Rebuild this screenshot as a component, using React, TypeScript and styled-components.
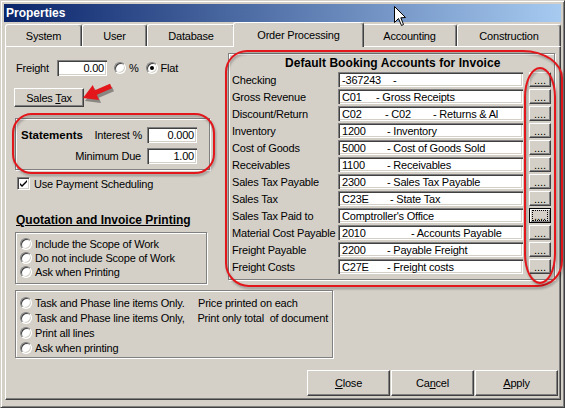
import styled, { createGlobalStyle, css } from 'styled-components';

const FACE = '#d4d0c8';
const SHADOW = '#808080';
const DARK = '#404040';
const RED = '#e3161b';

const GlobalStyle = createGlobalStyle`
  html, body {
    margin: 0;
    padding: 0;
    background: ${FACE};
  }
  body {
    font-family: "Liberation Sans", Arial, sans-serif;
    font-size: 11px;
  }
`;

type Part = [string, number?];
type Account = { label: string; parts: Part[]; focused?: boolean };

const accounts: Account[] = [
  { label: 'Checking', parts: [['-367243', 51], ['-']] },
  { label: 'Gross Revenue', parts: [['C01', 34], ['- Gross Receipts']] },
  { label: 'Discount/Return', parts: [['C02', 43], ['- C02', 48], ['- Returns & Al']] },
  { label: 'Inventory', parts: [['1200', 45], ['- Inventory']] },
  { label: 'Cost of Goods', parts: [['5000', 45], ['- Cost of Goods Sold']] },
  { label: 'Receivables', parts: [['1100', 45], ['- Receivables']] },
  { label: 'Sales Tax Payable', parts: [['2300', 45], ['- Sales Tax Payable']] },
  { label: 'Sales Tax', parts: [['C23E', 48], ['- State Tax']] },
  { label: 'Sales Tax Paid to', parts: [["Comptroller's Office"]], focused: true },
  { label: 'Material Cost Payable', parts: [['2010', 69], ['- Accounts Payable']] },
  { label: 'Freight Payable', parts: [['2200', 45], ['- Payable Freight']] },
  { label: 'Freight Costs', parts: [['C27E', 45], ['- Freight costs']] },
];

const tabs = [
  { name: 'System', w: 77 },
  { name: 'User', w: 65 },
  { name: 'Database', w: 88 },
  { name: 'Order Processing', w: 131, active: true },
  { name: 'Accounting', w: 95 },
  { name: 'Construction', w: 104 },
];

export default function App() {
  return (
    <>
      <GlobalStyle />
      <Window>
        <TitleBar>Properties</TitleBar>
        <TabStrip>
          {tabs.map(t => (
            <Tab key={t.name} $w={t.w} $active={t.active}>{t.name}</Tab>
          ))}
        </TabStrip>
        <Panel>
          <TopSection>
            <LeftCol>
              <FreightRow>
                <FreightLabel>Freight</FreightLabel>
                <TextBox $w={50}>0.00</TextBox>
                <Radio />
                <RadioText>%</RadioText>
                <Radio $on />
                <RadioText>Flat</RadioText>
              </FreightRow>
              <PushButton><span>Sales <u>T</u>ax</span></PushButton>
              <StatementsBox>
                <BoldLabel>Statements</BoldLabel>
                <RightLabel>Interest %</RightLabel>
                <TextBox $w={50}>0.000</TextBox>
                <RightLabel $span>Minimum Due</RightLabel>
                <TextBox $w={50}>1.00</TextBox>
              </StatementsBox>
              <CheckRow>
                <CheckBox>
                  <svg width="9" height="9" viewBox="0 0 9 9">
                    <path d="M1 4 L3 6 L8 1 L8 3 L3 8 L1 6 Z" fill="#000" />
                  </svg>
                </CheckBox>
                Use Payment Scheduling
              </CheckRow>
              <SectionHeading>Quotation and Invoice Printing</SectionHeading>
              <GroupBox $w={192}>
                <OptionRow $h={14}><Radio />Include the Scope of Work</OptionRow>
                <OptionRow $h={14}><Radio />Do not include Scope of Work</OptionRow>
                <OptionRow $h={14}><Radio />Ask when Printing</OptionRow>
              </GroupBox>
            </LeftCol>
            <AccountsBox>
              <AccountsTitle>Default Booking Accounts for Invoice</AccountsTitle>
              <AccountList>
                {accounts.map(a => (
                  <AccountRow key={a.label}>
                    <AccountLabel>{a.label}</AccountLabel>
                    <AccountField>
                      {a.parts.map(([text, w], i) => (
                        <Seg key={i} $w={w}>{text}</Seg>
                      ))}
                    </AccountField>
                    <BrowseButton $focused={a.focused}>
                      <BrowseDots $focused={a.focused}>....</BrowseDots>
                    </BrowseButton>
                  </AccountRow>
                ))}
              </AccountList>
            </AccountsBox>
          </TopSection>
          <GroupBox $w={318} $wide>
            <OptionRow $h={15}><Radio /><FirstCol>Task and Phase line items Only.</FirstCol>Price printed on each</OptionRow>
            <OptionRow $h={15}><Radio /><FirstCol>Task and Phase line items Only,</FirstCol>Print only total&nbsp; of document</OptionRow>
            <OptionRow $h={15}><Radio />Print all lines</OptionRow>
            <OptionRow $h={15}><Radio />Ask when printing</OptionRow>
          </GroupBox>
          <ButtonRow>
            <DialogButton><span><u>C</u>lose</span></DialogButton>
            <DialogButton><span>Ca<u>n</u>cel</span></DialogButton>
            <DialogButton><span><u>A</u>pply</span></DialogButton>
          </ButtonRow>
        </Panel>

        <Annotation $x={11} $y={112} $w={203} $h={61} $r="20px" />
        <Annotation $x={224} $y={49} $w={338} $h={237} $r="22px 40px 26px 24px / 22px 28px 26px 24px" />
        <Annotation $x={523} $y={66} $w={32} $h={217} $r="16px / 30px" />

        <Marker width="40" height="36" viewBox="0 0 40 36">
          <polygon
            points="6,21 15.8,8.1 17.9,13.2 33,6.7 35,11.3 19.9,17.8 22,23"
            fill="rgba(0,0,0,0.35)"
            transform="translate(2 3)"
          />
          <polygon points="6,21 15.8,8.1 17.9,13.2 33,6.7 35,11.3 19.9,17.8 22,23" fill={RED} />
        </Marker>

        <Cursor width="13" height="21" viewBox="0 0 13 21">
          <path d="M0.5 0.5 L0.5 16.5 L4.5 12.5 L7.5 19.5 L9.5 18.5 L6.8 11.8 L11.5 11.5 Z" fill="#fff" stroke="#000" strokeWidth="1" />
        </Cursor>
      </Window>
    </>
  );
}

const Window = styled.div`
  position: relative;
  box-sizing: border-box;
  width: 565px;
  height: 408px;
  padding: 3px;
  background: ${FACE};
  border: 1px solid;
  border-color: ${FACE} ${DARK} ${DARK} ${FACE};
  box-shadow: inset 1px 1px #fff, inset -1px -1px ${SHADOW};
  display: flex;
  flex-direction: column;
  overflow: hidden;
  color: #000;
  font-family: "Liberation Sans", Arial, sans-serif;
  font-size: 11px;
  letter-spacing: -0.2px;
`;

const TitleBar = styled.div`
  height: 18px;
  padding-left: 2px;
  background: linear-gradient(to right, #0a246a, #a6caf0);
  color: #fff;
  font-weight: bold;
  font-size: 12px;
  letter-spacing: 0;
  line-height: 18px;
`;

const TabStrip = styled.div`
  height: 24px;
  padding-left: 1px;
  display: flex;
  align-items: flex-end;
`;

const Tab = styled.div<{ $w: number; $active?: boolean }>`
  box-sizing: border-box;
  width: ${p => p.$w}px;
  height: ${p => (p.$active ? 25 : 22)}px;
  margin: 0 ${p => (p.$active ? -2 : 0)}px ${p => (p.$active ? -1 : 0)}px;
  position: relative;
  z-index: ${p => (p.$active ? 2 : 0)};
  background: ${FACE};
  border-top: 1px solid #fff;
  border-left: 1px solid #fff;
  border-right: 1px solid ${DARK};
  box-shadow: inset -1px 0 ${SHADOW};
  border-radius: 3px 3px 0 0;
  display: flex;
  align-items: center;
  justify-content: center;
  padding-top: ${p => (p.$active ? 0 : 1)}px;
  white-space: nowrap;
`;

const Panel = styled.div`
  box-sizing: border-box;
  width: 556px;
  height: 354px;
  margin-left: 1px;
  padding: 0 2px 3px 8px;
  border-top: 1px solid #fff;
  border-left: 1px solid #fff;
  border-right: 1px solid ${DARK};
  border-bottom: 1px solid ${DARK};
  box-shadow: inset -1px -1px ${SHADOW};
  display: flex;
  flex-direction: column;
`;

const TopSection = styled.div`
  display: flex;
  align-items: flex-start;
`;

const LeftCol = styled.div`
  width: 197px;
  margin-right: 17px;
  padding-top: 13px;
  display: flex;
  flex-direction: column;
  align-items: flex-start;
`;

const FreightRow = styled.div`
  height: 16px;
  padding-left: 2px;
  display: flex;
  align-items: center;
`;

const FreightLabel = styled.span`
  width: 41px;
`;

const TextBox = styled.div<{ $w: number }>`
  box-sizing: border-box;
  width: ${p => p.$w}px;
  height: 16px;
  padding: 0 3px;
  background: #fff;
  box-shadow: inset 1px 1px ${SHADOW}, inset 2px 2px ${DARK}, inset -1px -1px #fff, inset -2px -2px ${FACE};
  text-align: right;
  line-height: 16px;
  margin-right: 7px;
`;

const Radio = styled.span<{ $on?: boolean }>`
  box-sizing: border-box;
  flex-shrink: 0;
  position: relative;
  width: 12px;
  height: 12px;
  border-radius: 50%;
  background: #fff;
  border: 1px solid;
  border-color: ${SHADOW} #fff #fff ${SHADOW};
  box-shadow: inset 1px 1px ${DARK}, inset -1px -1px ${FACE};
  ${p =>
    p.$on &&
    css`
      &::after {
        content: '';
        position: absolute;
        left: 3px;
        top: 3px;
        width: 4px;
        height: 4px;
        border-radius: 50%;
        background: #000;
      }
    `}
`;

const RadioText = styled.span`
  margin: 0 7px 0 3px;
`;

const raised = css`
  box-sizing: border-box;
  background: ${FACE};
  border: 1px solid;
  border-color: #fff ${DARK} ${DARK} #fff;
  box-shadow: inset -1px -1px ${SHADOW};
  display: flex;
  align-items: center;
  justify-content: center;
  white-space: pre;
`;

const PushButton = styled.div`
  ${raised};
  width: 70px;
  height: 19px;
  margin-top: 12px;
`;

const etched = css`
  box-sizing: border-box;
  border: 1px solid ${SHADOW};
  box-shadow: inset 1px 1px #fff, 1px 1px #fff;
`;

const StatementsBox = styled.div`
  ${etched};
  width: 195px;
  height: 52px;
  margin: 11px 0 0 1px;
  padding: 8px 12px 0 5px;
  display: grid;
  grid-template-columns: auto 1fr 50px;
  grid-auto-rows: 16px;
  column-gap: 5px;
  row-gap: 5px;
  align-items: center;
`;

const BoldLabel = styled.span`
  font-weight: bold;
  font-size: 11.5px;
  letter-spacing: 0;
`;

const RightLabel = styled.span<{ $span?: boolean }>`
  text-align: right;
  ${p => p.$span && 'grid-column: 1 / 3; padding-right: 1px;'}
`;

const CheckRow = styled.div`
  margin: 7px 0 0 3px;
  height: 13px;
  display: flex;
  align-items: center;
  gap: 4px;
`;

const CheckBox = styled.span`
  box-sizing: border-box;
  width: 13px;
  height: 13px;
  background: #fff;
  border: 1px solid;
  border-color: ${SHADOW} #fff #fff ${SHADOW};
  box-shadow: inset 1px 1px ${DARK}, inset -1px -1px ${FACE};
  display: flex;
  align-items: center;
  justify-content: center;
`;

const SectionHeading = styled.div`
  margin: 24px 0 0 2px;
  font-weight: bold;
  font-size: 12px;
  letter-spacing: 0;
  line-height: 13px;
  text-decoration: underline;
`;

const GroupBox = styled.div<{ $w: number; $wide?: boolean }>`
  ${etched};
  width: ${p => p.$w}px;
  margin: ${p => (p.$wide ? '6px 0 0 1px' : '5px 0 0 1px')};
  padding: 4px 4px ${p => (p.$wide ? 2 : 4)}px;
  display: flex;
  flex-direction: column;
`;

const OptionRow = styled.div<{ $h: number }>`
  height: ${p => p.$h}px;
  display: flex;
  align-items: center;
  gap: 3px;
  white-space: nowrap;
`;

const FirstCol = styled.span`
  width: 160px;
`;

const AccountsBox = styled.div`
  ${etched};
  width: 327px;
  margin-top: 6px;
  padding: 2px 0 5px 3px;
`;

const AccountsTitle = styled.div`
  width: 216px;
  margin: 0 auto;
  height: 16px;
  overflow: hidden;
  white-space: nowrap;
  font-weight: bold;
  font-size: 12px;
  letter-spacing: 0.05px;
  line-height: 14px;
`;

const AccountList = styled.div`
  display: flex;
  flex-direction: column;
  gap: 2px;
`;

const AccountRow = styled.div`
  height: 15px;
  display: flex;
  align-items: center;
`;

const AccountLabel = styled.span`
  width: 106px;
  white-space: nowrap;
`;

const AccountField = styled.div`
  box-sizing: border-box;
  width: 185px;
  height: 15px;
  padding: 1px 2px 0 4px;
  background: #fff;
  box-shadow: inset 1px 1px ${SHADOW}, inset 2px 2px ${DARK}, inset -1px -1px #fff, inset -2px -2px ${FACE};
  line-height: 15px;
  white-space: nowrap;
  overflow: hidden;
`;

const Seg = styled.span<{ $w?: number }>`
  display: inline-block;
  ${p => p.$w && `width: ${p.$w}px;`}
`;

const BrowseButton = styled.div<{ $focused?: boolean }>`
  ${raised};
  width: 22px;
  height: 15px;
  margin-left: 6px;
  ${p => p.$focused && css`
    border-color: #000;
    box-shadow: inset 1px 1px #fff, inset -1px -1px ${SHADOW};
  `}
`;

const BrowseDots = styled.span<{ $focused?: boolean }>`
  line-height: 10px;
  height: 9px;
  padding: 0 1px;
  letter-spacing: 0;
  ${p => p.$focused && `outline: 1px dotted #000;`}
`;

const ButtonRow = styled.div`
  margin-top: auto;
  display: flex;
  justify-content: flex-end;
  gap: 1px;
`;

const DialogButton = styled.div`
  ${raised};
  width: 83px;
  height: 26px;
`;

const Annotation = styled.div<{ $x: number; $y: number; $w: number; $h: number; $r: string }>`
  position: absolute;
  left: ${p => p.$x}px;
  top: ${p => p.$y}px;
  width: ${p => p.$w}px;
  height: ${p => p.$h}px;
  box-sizing: border-box;
  border: 2px solid ${RED};
  border-radius: ${p => p.$r};
  filter: drop-shadow(1px 2px 1px rgba(0, 0, 0, 0.3));
  pointer-events: none;
`;

const Marker = styled.svg`
  position: absolute;
  left: 76px;
  top: 76px;
`;

const Cursor = styled.svg`
  position: absolute;
  left: 393px;
  top: 5px;
`;
